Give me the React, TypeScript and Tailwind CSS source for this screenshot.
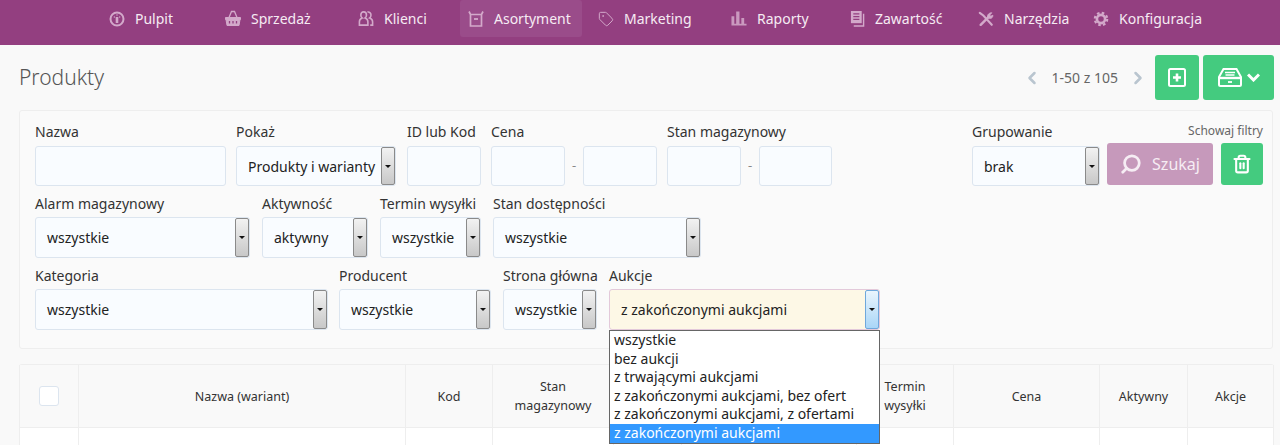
import { ChevronLeft, ChevronRight, Search, Trash2, Tag } from "lucide-react";
import type { ReactNode } from "react";

const IconPulpit = () => (
  <svg viewBox="0 0 16 16" className="h-[16px] w-[16px]" fill="none" stroke="currentColor" strokeWidth="2">
    <circle cx="8" cy="8" r="6.500" />
    <path d="M8 6v6" strokeWidth="2.600" />
    <path d="M4.800 6h1M10.200 6h1M7.500 4h1" strokeWidth="1.300" />
  </svg>
);
const IconBasket = () => (
  <svg viewBox="0 0 16 16" className="h-[17px] w-[16px]" fill="none" stroke="currentColor">
    <path d="M4 7l2.500-6h3L12 7" strokeWidth="1.300" />
    <path d="M.5 7h15v2H15l-1 6H2L1 9H.5z" fill="currentColor" strokeWidth="1" />
    <path d="M4.500 10.500v2.500M8 10.500v2.500M11.500 10.500v2.500" stroke="#933f80" strokeWidth="1.300" />
  </svg>
);
const IconKlienci = () => (
  <svg viewBox="0 0 17 17" className="h-[17px] w-[17px]" fill="none" stroke="currentColor" strokeWidth="1.700">
    <path d="M6 1.500c-2 0-3 1.400-3 3.200 0 1.500.6 2.600 1.400 3.200C2.600 8.500 1.500 10 1.500 12v3.500h9V12c0-2-1.100-3.500-2.900-4.100.8-.6 1.400-1.700 1.400-3.200 0-1.800-1-3.200-3-3.200z" />
    <path d="M10 1.700c2-.6 3.800.8 3.800 3 0 1.500-.6 2.600-1.400 3.200 1.800.6 3.100 2.100 3.100 4.100v3.500h-2.500" />
  </svg>
);
const IconBox = () => (
  <svg viewBox="0 0 16 16" className="h-[16px] w-[16px]" fill="none" stroke="currentColor" strokeWidth="1.700">
    <path d="M2.500 3.500h11v11.500h-11zM1 .5l1.500 3M15 .5l-1.500 3" />
    <path d="M6 8h4" strokeWidth="1.800" />
  </svg>
);
const IconBars = () => (
  <svg viewBox="0 0 17 17" className="h-[17px] w-[17px]" fill="currentColor" fillOpacity="0.85">
    <path d="M.5 15.500V6h3v8h2V1h3.500v13h2V8h3v6H16.500v2H.5z" />
  </svg>
);
const IconDoc = () => (
  <svg viewBox="0 0 16 17" className="h-[17px] w-[15px]">
    <path d="M1 .5h11.500v13H1z" fill="currentColor" />
    <path d="M3.500 3.500h6.500M3.500 6.500h6.500M3.500 9.500h6.500" stroke="#933f80" strokeWidth="1.300" />
    <path d="M14.500 3.500v13H4" fill="none" stroke="currentColor" strokeWidth="1.500" />
  </svg>
);
const IconTools = () => (
  <svg viewBox="0 0 18 18" className="h-[18px] w-[18px]" fill="none" stroke="currentColor" strokeLinecap="round">
    <path d="M2 2l4 3 9.500 10.500" strokeWidth="2.400" />
    <path d="M3 15.500L12 6.500" strokeWidth="2.800" />
    <path d="M11 7.500c-1-2.500.8-5.500 4.500-5.500l-2.300 2.500 1 1.500 2.500-1.200c.2 3-2.700 4.800-5.700 2.700z" fill="currentColor" strokeWidth="1" />
  </svg>
);
const IconGear = () => (
  <svg viewBox="0 0 18 18" className="h-[18px] w-[18px]" fill="none" stroke="currentColor">
    <circle cx="9" cy="9" r="4.600" strokeWidth="3" />
    <circle cx="9" cy="9" r="7" strokeWidth="2.400" strokeDasharray="2.900 2.600" />
  </svg>
);
const IconAddDoc = () => (
  <svg viewBox="0 0 18 19" className="h-[19px] w-[18px]" fill="none" stroke="currentColor" strokeWidth="2">
    <rect x="1" y="1" width="16" height="17" rx="1.500" />
    <path d="M9 5.500v8M5 9.500h8" strokeWidth="2.600" />
  </svg>
);
const IconDrawer = () => (
  <svg viewBox="0 0 24 19" className="h-[19px] w-[24px]" fill="none" stroke="currentColor" strokeWidth="2">
    <path d="M5.500 1h13L23 9v7.500a1.500 1.500 0 0 1-1.500 1.500h-19A1.500 1.500 0 0 1 1 16.500V9z" />
    <path d="M1 10h22" strokeWidth="2.400" />
    <path d="M7 4.500h10" strokeWidth="1.500" />
    <path d="M7.500 7h9" strokeWidth="1.500" />
    <path d="M10 14h4" strokeWidth="1.800" />
  </svg>
);

const nav: { label: string; icon: ReactNode; active?: boolean; cls: string }[] = [
  { label: "Pulpit", icon: <IconPulpit />, cls: "w-[116px]" },
  { label: "Sprzedaż", icon: <IconBasket />, cls: "w-[133px]" },
  { label: "Klienci", icon: <IconKlienci />, cls: "w-[110px]" },
  { label: "Asortyment", icon: <IconBox />, active: true, cls: "w-[122px] mr-[8px]" },
  { label: "Marketing", icon: <Tag size={16} strokeWidth={1.5} />, cls: "w-[133px]" },
  { label: "Raporty", icon: <IconBars />, cls: "w-[118px]" },
  { label: "Zawartość", icon: <IconDoc />, cls: "w-[129px]" },
  { label: "Narzędzia", icon: <IconTools />, cls: "w-[115px]" },
  { label: "Konfiguracja", icon: <IconGear />, cls: "w-[120px]" },
];

const options = [
  "wszystkie",
  "bez aukcji",
  "z trwającymi aukcjami",
  "z zakończonymi aukcjami, bez ofert",
  "z zakończonymi aukcjami, z ofertami",
];

function Field({ label, className, labelH = "h-[24px]", children }: { label: string; className: string; labelH?: string; children: ReactNode }) {
  return (
    <div className={className}>
      <div className={`${labelH} whitespace-nowrap text-[14px] leading-[20px] text-[#333]`}>{label}</div>
      {children}
    </div>
  );
}

function Input({ className }: { className: string }) {
  return <div className={`h-[40px] rounded-[3px] border border-[#dce5ef] bg-[#f9fcff] ${className}`} />;
}

function Select({ value, h = "h-[41px]" }: { value: string; h?: string }) {
  return (
    <div className={`flex ${h} items-stretch rounded-[3px] border border-[#dce5ef] bg-[#f9fcff]`}>
      <div className="flex-1 overflow-hidden whitespace-nowrap pl-[11px] text-[14px] leading-[40px] text-[#222]">{value}</div>
      <div className="flex w-[14px] shrink-0 items-center justify-center rounded-[2px] border border-[#8a8a8a] bg-gradient-to-b from-[#f2f2f2] to-[#c8c8c8]">
        <span className="h-0 w-0 border-x-[3px] border-t-[3px] border-x-transparent border-t-[#111]" />
      </div>
    </div>
  );
}

const cols = [
  { w: "w-[60px]", label: "" },
  { w: "w-[327px]", label: "Nazwa (wariant)" },
  { w: "w-[87px]", label: "Kod" },
  { w: "w-[121px] px-[18px]", label: "Stan magazynowy" },
  { w: "w-[68px]", label: "" },
  { w: "w-[175px]", label: "" },
  { w: "w-[97px] px-[18px]", label: "Termin wysyłki" },
  { w: "w-[146px]", label: "Cena" },
  { w: "w-[88px]", label: "Aktywny" },
  { w: "w-[86px]", label: "Akcje" },
];

export default function App() {
  return (
    <div className="h-[445px] w-[1280px] overflow-hidden bg-[#f9f9f9] font-['Noto_Sans',sans-serif]">
      <nav className="flex h-[45px] bg-[#933f80] pl-[101px]">
        {nav.map((n) => (
          <a
            key={n.label}
            className={`flex h-[37px] shrink-0 items-center gap-[10px] rounded-[3px] pl-[8px] text-[14px] text-[#f6ebf3] ${n.cls} ${n.active ? "bg-[#9a4c8a]" : ""}`}
          >
            <span className="flex w-[16px] justify-center text-[#d3a9ca]">{n.icon}</span>
            {n.label}
          </a>
        ))}
      </nav>

      <div className="flex h-[65px] items-start pl-[19px] pr-[6px] pt-[10px]">
        <h1 className="flex-1 pt-[6px] text-[21px] font-light leading-[32px] text-[#555]">Produkty</h1>
        <div className="flex h-[45px] items-center gap-[10px] text-[14px] text-[#666]">
          <ChevronLeft size={20} strokeWidth={3} className="text-[#b9c5cf]" />
          <span>1-50 z 105</span>
          <ChevronRight size={20} strokeWidth={3} className="text-[#b9c5cf]" />
        </div>
        <button className="ml-[7px] flex h-[45px] w-[44px] items-center justify-center rounded-[3px] bg-[#44cb7f] text-white">
          <IconAddDoc />
        </button>
        <button className="ml-[4px] flex h-[45px] w-[71px] items-center justify-center gap-[5px] rounded-[3px] bg-[#44cb7f] text-white">
          <IconDrawer />
          <svg viewBox="0 0 13 9" className="h-[9px] w-[13px]" fill="none" stroke="currentColor" strokeWidth="3">
            <path d="M1 1.500l5.500 5.500L12 1.500" />
          </svg>
        </button>
      </div>

      <section className="relative mx-[19px] mr-[7px] h-[239px] rounded-[3px] border border-[#eeeeee] bg-[#fafafa] pl-[15px] pt-[11px]">
        <div className="flex">
          <Field label="Nazwa" className="w-[191px]"><Input className="w-full" /></Field>
          <Field label="Pokaż" className="ml-[10px] w-[160px]"><Select value="Produkty i warianty" h="h-[40px]" /></Field>
          <Field label="ID lub Kod" className="ml-[11px] w-[74px]"><Input className="w-full" /></Field>
          <Field label="Cena" className="ml-[10px] w-[166px]">
            <div className="flex items-center">
              <Input className="w-[74px]" />
              <span className="w-[18px] text-center text-[13px] text-[#888]">-</span>
              <Input className="w-[74px]" />
            </div>
          </Field>
          <Field label="Stan magazynowy" className="ml-[10px] w-[165px]">
            <div className="flex items-center">
              <Input className="w-[74px]" />
              <span className="w-[18px] text-center text-[13px] text-[#888]">-</span>
              <Input className="w-[73px]" />
            </div>
          </Field>
          <Field label="Grupowanie" className="ml-[140px] w-[128px]"><Select value="brak" h="h-[40px]" /></Field>
          <div className="ml-[7px] w-[156px]">
            <div className="h-[21px] pt-[1px] text-right text-[12px] leading-[16px] text-[#666]">Schowaj filtry</div>
            <div className="flex gap-[8px]">
              <button className="flex h-[42px] w-[106px] items-center justify-center gap-[10px] rounded-[3px] bg-[#c699bb] text-[16px] text-[#f6edf4]">
                <Search size={22} strokeWidth={3} className="-scale-x-100" />
                Szukaj
              </button>
              <button className="flex h-[42px] w-[42px] items-center justify-center rounded-[3px] bg-[#44cb7f] text-white">
                <Trash2 size={20} strokeWidth={2.5} />
              </button>
            </div>
          </div>
        </div>

        <div className="mt-[8px] flex">
          <Field label="Alarm magazynowy" labelH="h-[23px]" className="w-[215px]"><Select value="wszystkie" /></Field>
          <Field label="Aktywność" labelH="h-[23px]" className="ml-[12px] w-[106px]"><Select value="aktywny" /></Field>
          <Field label="Termin wysyłki" labelH="h-[23px]" className="ml-[12px] w-[101px]"><Select value="wszystkie" /></Field>
          <Field label="Stan dostępności" labelH="h-[23px]" className="ml-[12px] w-[208px]"><Select value="wszystkie" /></Field>
        </div>

        <div className="mt-[8px] flex">
          <Field label="Kategoria" labelH="h-[23px]" className="w-[293px]"><Select value="wszystkie" /></Field>
          <Field label="Producent" labelH="h-[23px]" className="ml-[11px] w-[152px]"><Select value="wszystkie" /></Field>
          <Field label="Strona główna" labelH="h-[23px]" className="ml-[12px] w-[94px]"><Select value="wszystkie" /></Field>
          <Field label="Aukcje" labelH="h-[23px]" className="relative z-10 ml-[12px] w-[271px]">
            <div className="flex h-[41px] items-stretch rounded-[3px] border border-[#e3c9da] bg-[#fdf8e6]">
              <div className="flex-1 pl-[11px] text-[14px] leading-[40px] text-[#222]">z zakończonymi aukcjami</div>
              <div className="flex w-[14px] items-center justify-center rounded-[2px] border border-[#6fa8dc] bg-gradient-to-b from-[#eaf5fd] to-[#a9d6f7]">
                <span className="h-0 w-0 border-x-[3px] border-t-[3px] border-x-transparent border-t-[#111]" />
              </div>
            </div>
            {/* otwarta lista selecta */}
            <ul className="absolute left-0 top-[64px] w-[271px] border border-[#666] bg-white text-[14px] leading-[18.6px] text-[#222]">
              {options.map((o) => (
                <li key={o} className="h-[18.6px] whitespace-nowrap px-[4px]">{o}</li>
              ))}
              <li className="h-[18.6px] bg-[#3399ff] px-[4px] text-white">z zakończonymi aukcjami</li>
            </ul>
          </Field>
        </div>
      </section>

      <div className="ml-[19px] mr-[6px] mt-[15px] rounded-t-[3px] border-t border-[#eeeeee]">
        <div className="flex h-[63px] border-b border-[#eeeeee] bg-[#f9f9f9]">
          {cols.map((c, i) => (
            <div
              key={i}
              className={`flex shrink-0 items-center justify-center border-r border-[#eeeeee] text-center text-[12.500px] leading-[19px] text-[#333] ${c.w} ${i === 0 ? "border-l" : ""}`}
            >
              {i === 0 ? <span className="h-[20px] w-[20px] rounded-[3px] border border-[#dce5ef] bg-white" /> : c.label}
            </div>
          ))}
        </div>
        <div className="flex h-[40px] bg-white">
          {cols.map((c, i) => (
            <div key={i} className={`shrink-0 border-r border-[#eeeeee] ${c.w} ${i === 0 ? "border-l" : ""}`} />
          ))}
        </div>
      </div>
    </div>
  );
}
